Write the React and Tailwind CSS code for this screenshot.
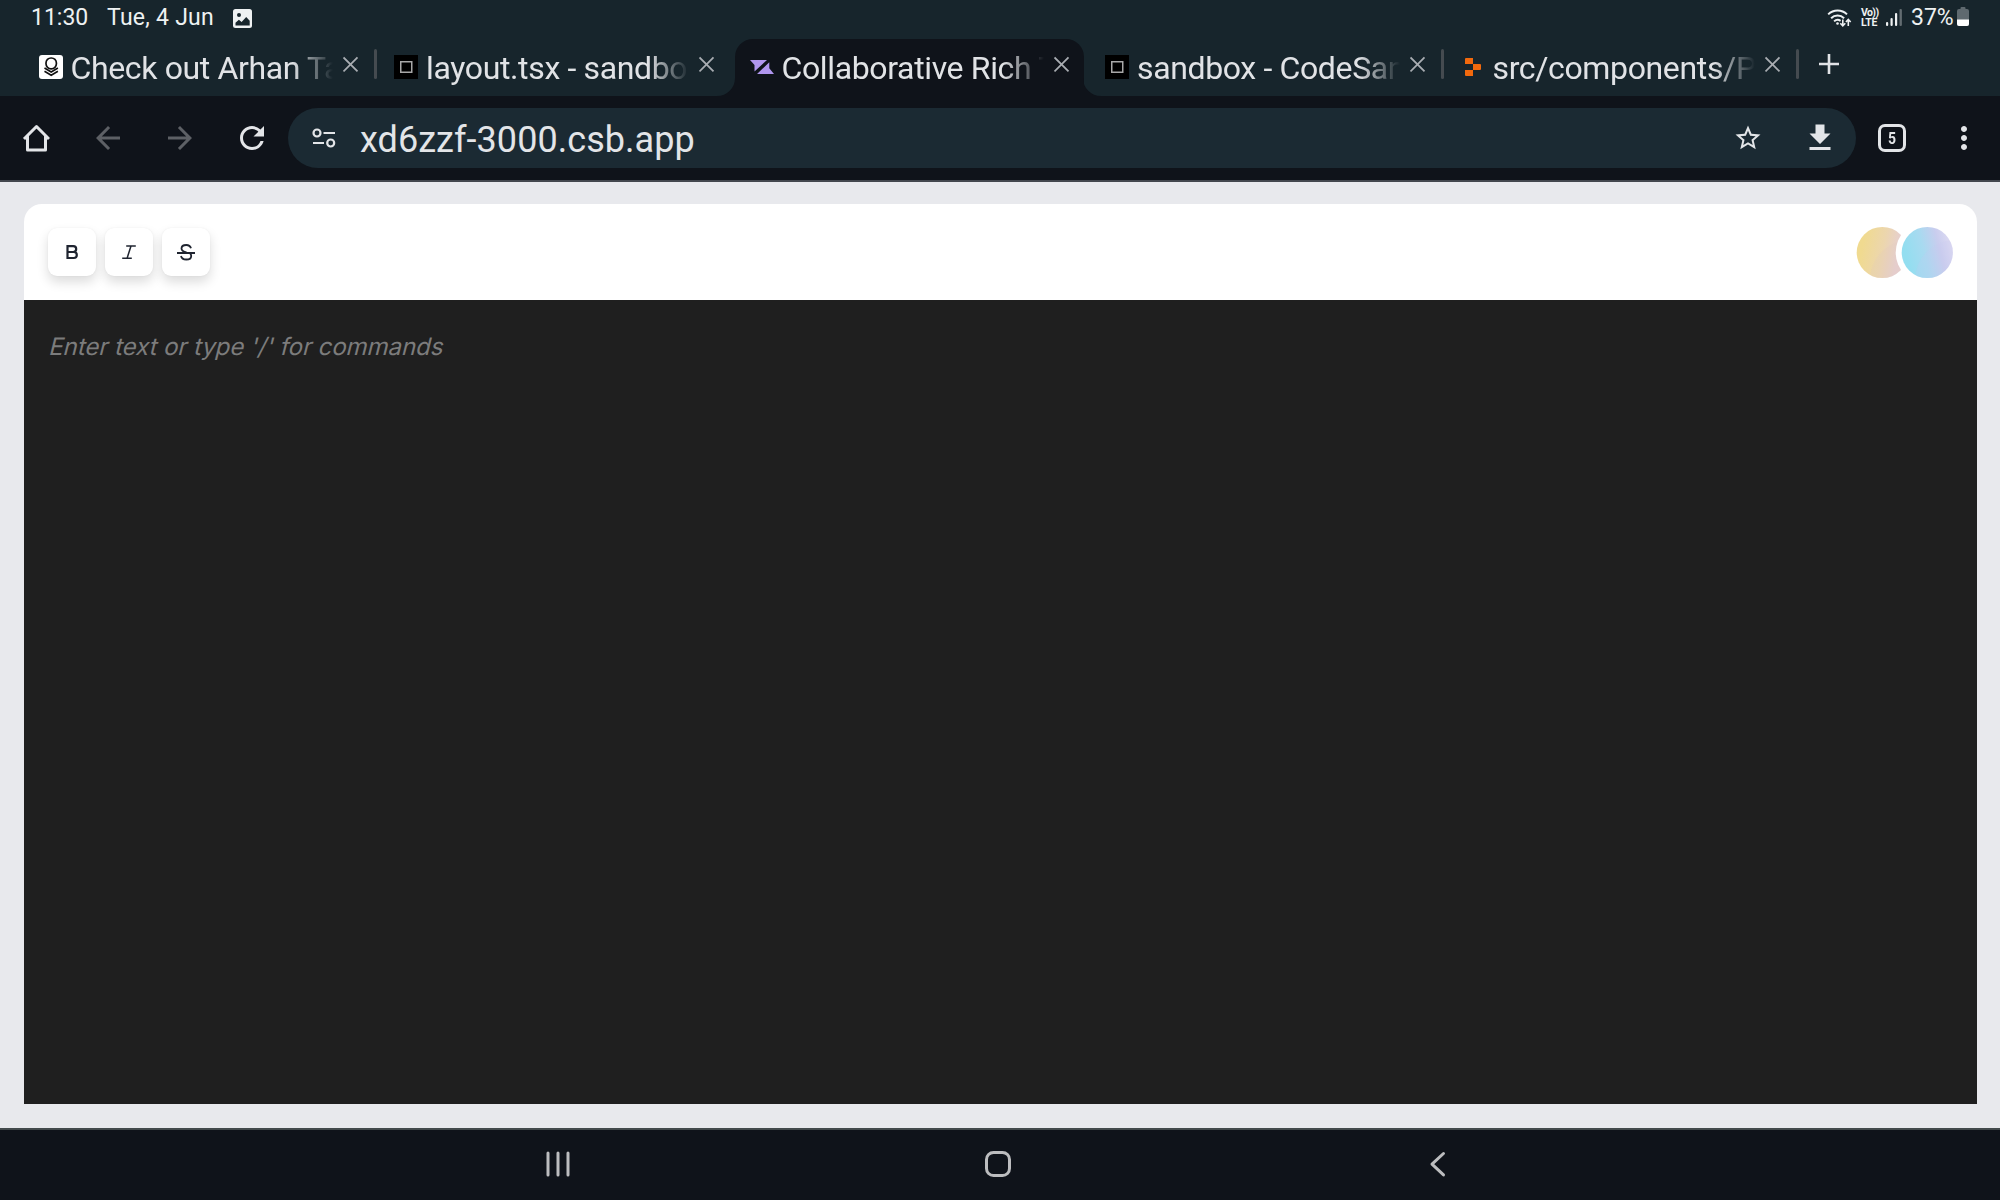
import { MdArrowBack, MdArrowForward, MdRefresh, MdStarBorder, MdFileDownload, MdMoreVert } from "react-icons/md";

function PersonFavicon() {
  return (
    <svg width="24" height="24" viewBox="0 0 24 24" fill="none">
      <rect width="24" height="24" rx="3" fill="#fff" />
      <rect x="7" y="3" width="10.4" height="10.8" rx="5" stroke="#111" strokeWidth="1.7" />
      <path d="M5.5 13l6.700 4 6.700-4M5.5 16.200l6.700 4 6.700-4" stroke="#111" strokeWidth="1.6" />
    </svg>
  );
}

function SandboxFavicon() {
  return (
    <svg width="24" height="24" viewBox="0 0 24 24" fill="none">
      <rect width="24" height="24" fill="#000" />
      <rect x="6.75" y="6.75" width="11" height="10.5" stroke="#a8a8a8" strokeWidth="1.5" />
    </svg>
  );
}

function LiveFavicon() {
  return (
    <svg width="24" height="24" viewBox="0 0 24 24" fill="#b096ee">
      <path d="M0 5h17L4.5 16.5V10z" />
      <path d="M19.3 7.3v6L24 19H7z" />
    </svg>
  );
}

function BlocksFavicon() {
  return (
    <svg width="24" height="24" viewBox="0 0 24 24" fill="#f2690d">
      <path d="M5 3h7v6H4V4a1 1 0 0 1 1-1zM12 9h7a1 1 0 0 1 1 1v4a1 1 0 0 1-1 1h-7zM4 15h8v6H5a1 1 0 0 1-1-1z" />
    </svg>
  );
}

const tabs = [
  { title: "Check out Arhan Ta", Icon: PersonFavicon, sep: true },
  { title: "layout.tsx - sandbo", Icon: SandboxFavicon },
  { title: "Collaborative Rich T", Icon: LiveFavicon, active: true },
  { title: "sandbox - CodeSan", Icon: SandboxFavicon, sep: true },
  { title: "src/components/P", Icon: BlocksFavicon, sep: true },
];

function Tab({ title, Icon, active, sep }) {
  return (
    <div className="relative flex h-[57px] w-[355.5px] shrink-0">
      <div className={active ? "flex w-[348.5px] rounded-t-[18px] bg-[#0f131a] pl-[14.9px]" : "flex w-[348.5px] pl-[14.9px]"}>
        <span className="mt-4 h-6 w-6 shrink-0"><Icon /></span>
        <span className="ml-[7.6px] mt-[10px] w-[264px] shrink-0 whitespace-nowrap text-[32px] leading-[38px] tracking-[-0.36px] text-[#e1e3e6] [mask-image:linear-gradient(to_right,#000_222px,transparent_263px)]">
          {title}
        </span>
        <svg className="ml-[9px] mt-[17px] shrink-0" width="16" height="17" viewBox="0 0 16 17" stroke="#a9adb2" strokeWidth="1.8">
          <path d="M.5 1.400l14 14M14.500 1.400l-14 14" />
        </svg>
      </div>
      {sep && <span className="ml-[1.5px] mt-[10px] h-[30px] w-[3px] rounded-full bg-[#454b50]" />}
      {active && (
        <>
          <svg className="absolute bottom-0 -left-[18px]" width="18" height="18" viewBox="0 0 18 18" fill="#0f131a"><path d="M18 0v18H0A18 18 0 0 0 18 0z" /></svg>
          <svg className="absolute bottom-0 left-[348px]" width="18" height="18" viewBox="0 0 18 18" fill="#0f131a"><path d="M0 0v18h18A18 18 0 0 1 0 0z" /></svg>
        </>
      )}
    </div>
  );
}

function StatusBar() {
  return (
    <div className="flex h-[39px] text-[23px] leading-[36px] text-[#eef1f2]">
      <span className="ml-[31px] w-[76px]">11:30</span>
      <span className="w-[126px] whitespace-nowrap tracking-[0.25px]">Tue, 4 Jun</span>
      <svg className="mt-[9px]" width="19" height="19" viewBox="0 0 19 19">
        <rect width="19" height="19" rx="2.5" fill="#eef1f2" />
        <circle cx="6" cy="6" r="2" fill="#17252c" />
        <path d="M2.5 16v-2.3l3.4-3 2.7 2.4 4.6-5 3.5 3.7V16.5H2.5z" fill="#17252c" />
      </svg>
      <div className="ml-auto flex">
        <svg className="mt-[8px]" width="25" height="20" viewBox="0 0 25 20" fill="none" stroke="#eef1f2" strokeWidth="2">
          <path d="M1.2 6.4a13.4 13.4 0 0 1 18.8 0M4.1 10.2a9.2 9.2 0 0 1 13 0M7.1 13.4a5.2 5.2 0 0 1 6.5-.6" />
          <circle cx="10.500" cy="15.5" r="1.3" fill="#eef1f2" stroke="none" />
          <path d="M15.8 11.5v6M13.300 15.3l2.5 2.5 2.5-2.5M21.300 18v-6M18.900 14l2.4-2.5L23.700 14" strokeWidth="1.6" />
        </svg>
        <span className="ml-[9px] mt-[8px] flex w-[19px] flex-col text-[10.5px] font-bold leading-[9.5px] tracking-[-0.3px]">
          <span className="whitespace-nowrap tracking-[-0.6px]">Vo))</span>
          <span>LTE</span>
        </span>
        <svg className="ml-[6px] mt-[8px]" width="17" height="18" viewBox="0 0 17 18" fill="#eef1f2">
          <rect y="14" width="2.2" height="4" rx="1" />
          <rect x="4.5" y="10" width="2.2" height="8" rx="1" />
          <rect x="9" y="5" width="2.2" height="13" rx="1" />
          <rect x="13.5" y="1" width="2.4" height="17" rx="1" fill="#636c71" />
        </svg>
        <span className="ml-[8px] w-[46px]">37%</span>
        <svg className="mr-[31px] mt-[7px]" width="12" height="19" viewBox="0 0 12 19">
          <path d="M3.5 1.2Q3.500 0 4.500 0h3q1 0 1 1.200V2H10a2 2 0 0 1 2 2v13a2 2 0 0 1-2 2H2a2 2 0 0 1-2-2V4a2 2 0 0 1 2-2h1.500z" fill="#5f696f" />
          <path d="M0 12.500h12V17a2 2 0 0 1-2 2H2a2 2 0 0 1-2-2z" fill="#fff" />
        </svg>
      </div>
    </div>
  );
}

function Slot({ children }) {
  return <span className="flex h-full w-[72px] shrink-0 items-center justify-center">{children}</span>;
}

function AddressBar() {
  return (
    <div className="flex h-[86px] border-b-2 border-[#43474e] bg-[#0f131a] text-[#e3e5e8]">
      <Slot>
        <svg width="28" height="28" viewBox="0 0 28 28" fill="none" stroke="currentColor" strokeWidth="3" strokeLinejoin="round">
          <path d="M2 15L14.500 2.500 27 15M5.500 12v14h18V12" />
        </svg>
      </Slot>
      <Slot><MdArrowBack size={36} color="#5d6065" /></Slot>
      <Slot><MdArrowForward size={36} color="#5d6065" /></Slot>
      <Slot><MdRefresh size={36} /></Slot>
      <div className="mt-3 flex h-[60px] w-[1568px] rounded-full bg-[#1b2a33]">
        <Slot>
          <svg width="24" height="20" viewBox="0 0 24 20" fill="none" stroke="currentColor" strokeWidth="2.200">
            <circle cx="5" cy="5" r="3.500" /><path d="M11.500 5H23M1 15h11" /><circle cx="18.700" cy="15" r="3.500" />
          </svg>
        </Slot>
        <span className="mt-[10px] flex-1 text-[36px] leading-[44px] tracking-[0.05px]">xd6zzf-3000.csb.app</span>
        <Slot><MdStarBorder size={30} /></Slot>
        <Slot><MdFileDownload size={36} /></Slot>
      </div>
      <Slot>
        <span className="flex h-[28px] w-[28px] items-center justify-center rounded-[7px] border-[3px] border-current text-[17px] font-bold leading-none"><span className="scale-x-[0.82]">5</span></span>
      </Slot>
      <Slot><MdMoreVert size={36} /></Slot>
    </div>
  );
}

function FormatButton({ children }) {
  return (
    <span className="flex h-12 w-12 items-center justify-center rounded-[9px] bg-white text-[#1f2430] shadow-[0_0_2px_rgba(0,0,0,0.06),0_6px_12px_rgba(0,0,0,0.14)]">
      {children}
    </span>
  );
}

function Editor() {
  return (
    <div className="flex h-[946px] flex-col bg-[#e8e9ed] pb-6 pl-6 pr-[23px] pt-[22px]">
      <div className="flex h-24 items-center rounded-t-[18px] bg-white px-6">
        <div className="flex gap-[9px]">
          <FormatButton>
            <svg width="24" height="24" viewBox="0 0 24 24" fill="none" stroke="currentColor" strokeWidth="2.200">
              <path d="M7.500 6.200h5.800a2.800 2.800 0 0 1 0 5.800H7.500zM7.500 12h6.300a3 3 0 0 1 0 6H7.500z" />
            </svg>
          </FormatButton>
          <FormatButton>
            <svg width="24" height="24" viewBox="0 0 24 24" fill="none" stroke="currentColor" strokeWidth="1.500">
              <path d="M9.200 6h9.600M5.200 18.200h9.600M14 6l-3.900 12.200" />
            </svg>
          </FormatButton>
          <FormatButton>
            <svg width="24" height="24" viewBox="0 0 24 24" fill="none" stroke="currentColor" strokeWidth="1.800">
              <path d="M3 13h18M17 8.300Q16 5 12.300 5 7.500 5 7.500 8.500q0 2.800 5 4M7 16q.8 3.500 5.300 3.500 4.900 0 4.900-3.600 0-1.400-1-2.400" />
            </svg>
          </FormatButton>
        </div>
        <svg className="ml-auto" width="97" height="64" viewBox="0 0 97 64">
          <defs>
            <linearGradient id="warm" x1="0" y1=".4" x2="1" y2=".6"><stop offset=".1" stopColor="#f0da90" /><stop offset=".5" stopColor="#ecd6ae" /><stop offset=".8" stopColor="#e6cfd0" /></linearGradient>
            <linearGradient id="cool" x1="0" y1=".65" x2="1" y2=".4"><stop offset=".1" stopColor="#93def0" /><stop offset=".45" stopColor="#a8daf0" /><stop offset=".75" stopColor="#c9cdee" /><stop offset="1" stopColor="#dddaf2" /></linearGradient>
            <clipPath id="first"><circle cx="26.300" cy="32.500" r="25.600" /></clipPath>
            <clipPath id="second"><circle cx="71.300" cy="32.500" r="25.600" /></clipPath>
          </defs>
          <circle cx="26.300" cy="32.500" r="25.600" fill="url(#warm)" />
          <circle cx="54" cy="60" r="40" fill="#e3c9c0" opacity=".2" clipPath="url(#first)" />
          <circle cx="71.300" cy="32.500" r="31.600" fill="#fff" />
          <circle cx="71.300" cy="32.500" r="25.600" fill="url(#cool)" />
          <circle cx="99" cy="60" r="40" fill="#c8c8f0" opacity=".2" clipPath="url(#second)" />
        </svg>
      </div>
      <div className="flex-1 bg-[#1f1f1f] px-6 pt-[29px] font-[Inter,sans-serif] text-[24px] leading-[36px] text-[#7c7c7c]">
        <span className="inline-block origin-[0_26px] -skew-x-[14deg] tracking-[-0.055px]">Enter text or type '/' for commands</span>
      </div>
    </div>
  );
}

function NavBar() {
  return (
    <div className="flex h-[72px] border-t-2 border-[#434a4c] bg-[#0f131a] text-[#bcbdbf]">
      <svg className="ml-[538px] mt-[14px]" width="40" height="40" viewBox="0 0 40 40" stroke="currentColor" strokeWidth="3" strokeLinecap="round">
        <path d="M10 9v22M20 9v22M30 9v22" />
      </svg>
      <svg className="ml-[400px] mt-[14px]" width="40" height="40" viewBox="0 0 40 40" fill="none" stroke="currentColor" strokeWidth="3">
        <rect x="8.500" y="8.500" width="23" height="23" rx="7" />
      </svg>
      <svg className="ml-[400px] mt-[14px]" width="40" height="40" viewBox="0 0 40 40" fill="none" stroke="currentColor" strokeWidth="3" strokeLinecap="round" strokeLinejoin="round">
        <path d="M25.500 9.500L14 20.200l11.500 10.700" />
      </svg>
    </div>
  );
}

export default function App() {
  return (
    <div className="flex h-[1200px] w-[2000px] flex-col overflow-hidden bg-[#17252c] font-[Roboto,sans-serif]">
      <StatusBar />
      <div className="flex h-[57px] pl-6">
        {tabs.map((t) => <Tab key={t.title} {...t} />)}
        <svg className="ml-[17px] mt-[15px]" width="20" height="20" viewBox="0 0 20 20" stroke="#e1e3e6" strokeWidth="2.600"><path d="M10 0v20M0 10h20" /></svg>
      </div>
      <AddressBar />
      <Editor />
      <NavBar />
    </div>
  );
}
